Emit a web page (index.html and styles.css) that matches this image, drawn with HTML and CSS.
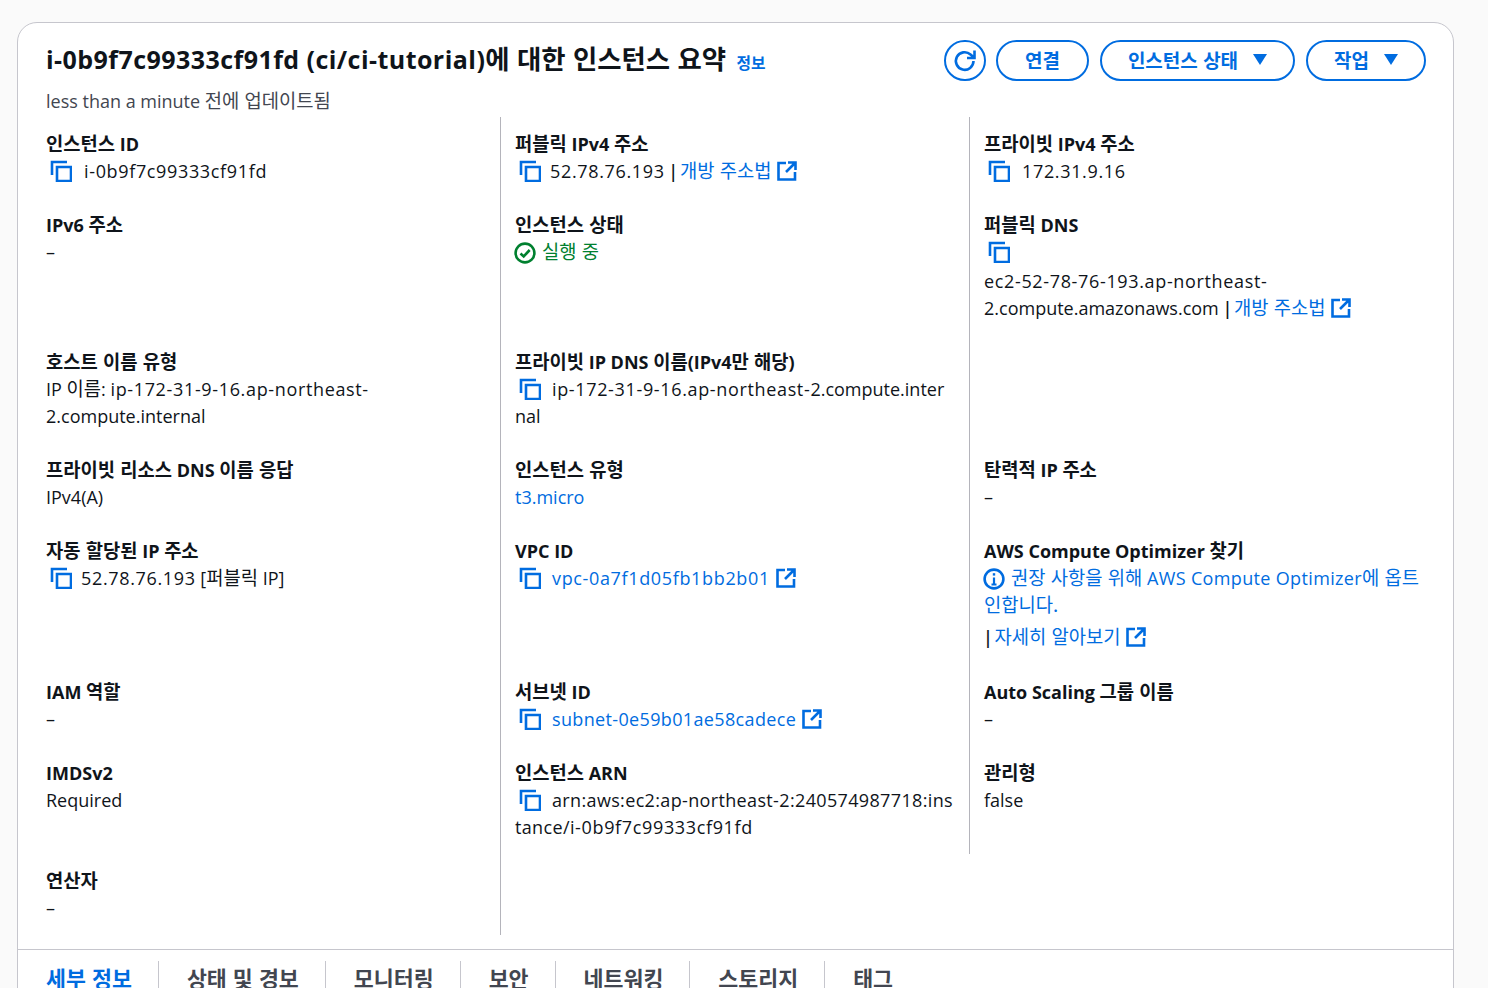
FILE: index.html
```html
<!DOCTYPE html>
<html lang="ko">
<head>
<meta charset="utf-8">
<title>인스턴스 요약</title>
<link rel="stylesheet" href="styles.css">
</head>
<body>
<svg class="defs" width="0" height="0" aria-hidden="true">
  <symbol id="copy" viewBox="0 0 22 22"><path d="M2 15V2h15M7 7h14v14H7z" fill="none" stroke="#006ce0" stroke-width="2.6"/></symbol>
  <symbol id="ext" viewBox="0 0 20 20"><path d="M9 2H1.500v16.500h16.500V11M11 1.500h7.500V9M18.500 1.500 9 11" fill="none" stroke="#006ce0" stroke-width="2.600"/></symbol>
</svg>
<main class="card">
  <header class="head">
    <div class="head-top">
      <h1 class="title"><span class="title-id">i-0b9f7c99333cf91fd (ci/ci-tutorial)</span><span class="ko">에 대한 인스턴스 요약</span> <a class="info">정보</a></h1>
      <div class="actions">
        <button class="btn btn-icon" aria-label="새로 고침"><svg width="24" height="24" viewBox="0 0 24 24"><path d="M20.500 12a8.800 8.800 0 1 1-3-6.600L21 8.500M21.500 1.500v7.500H14" fill="none" stroke="#006ce0" stroke-width="2.600"/></svg></button>
        <button class="btn btn-connect">연결</button>
        <button class="btn btn-state">인스턴스 상태<span class="caret"></span></button>
        <button class="btn btn-action">작업<span class="caret"></span></button>
      </div>
    </div>
    <p class="updated">less than a minute <span class="ko">전에 업데이트됨</span></p>
  </header>
  <section class="grid">
    <div class="cell"><div class="lbl"><span class="ko">인스턴스</span> ID</div><div class="val"><svg class="ic-copy"><use href="#copy"/></svg><span class="gap-l num">i-0b9f7c99333cf91fd</span></div></div>
    <div class="cell sep"><div class="lbl"><span class="ko">퍼블릭</span> IPv4 <span class="ko">주소</span></div><div class="val"><svg class="ic-copy"><use href="#copy"/></svg><span class="num">52.78.76.193</span> <span class="pipe">|</span> <a class="lnk ko">개방 주소법</a> <svg class="ic-ext"><use href="#ext"/></svg></div></div>
    <div class="cell sep"><div class="lbl"><span class="ko">프라이빗</span> IPv4 <span class="ko">주소</span></div><div class="val"><svg class="ic-copy"><use href="#copy"/></svg><span class="gap-l num">172.31.9.16</span></div></div>

    <div class="cell"><div class="lbl">IPv6 <span class="ko">주소</span></div><div class="val">–</div></div>
    <div class="cell sep"><div class="lbl"><span class="ko">인스턴스 상태</span></div><div class="val ok"><svg class="ic-ok" viewBox="0 0 22 22"><circle cx="11" cy="11" r="9.400" fill="none" stroke="#00802f" stroke-width="2.600"/><path d="M6.500 11.500l3.200 3 6-6.500" fill="none" stroke="#00802f" stroke-width="2.600"/></svg><span class="ko">실행 중</span></div></div>
    <div class="cell sep"><div class="lbl"><span class="ko">퍼블릭</span> DNS</div><div class="val icon-row"><svg class="ic-copy"><use href="#copy"/></svg></div><div class="val"><span class="num">ec2-52-78-76-193.ap-northeast-</span>2.compute.amazonaws.com <span class="pipe">|</span> <a class="lnk ko">개방 주소법</a> <svg class="ic-ext"><use href="#ext"/></svg></div></div>

    <div class="cell"><div class="lbl"><span class="ko">호스트 이름 유형</span></div><div class="val">IP <span class="ko">이름</span>: <span class="num">ip-172-31-9-16.ap-northeast-</span>2.compute.internal</div></div>
    <div class="cell sep"><div class="lbl"><span class="ko">프라이빗</span> IP DNS <span class="ko">이름</span>(IPv4<span class="ko">만 해당</span>)</div><div class="val brk"><svg class="ic-copy"><use href="#copy"/></svg><span class="gap-m"><span class="num">ip-172-31-9-16.ap-northeast-</span>2.compute.internal</span></div></div>
    <div class="cell sep"></div>

    <div class="cell"><div class="lbl"><span class="ko">프라이빗 리소스</span> DNS <span class="ko">이름 응답</span></div><div class="val">IPv4(A)</div></div>
    <div class="cell sep"><div class="lbl"><span class="ko">인스턴스 유형</span></div><div class="val"><a class="lnk">t3.micro</a></div></div>
    <div class="cell sep"><div class="lbl"><span class="ko">탄력적</span> IP <span class="ko">주소</span></div><div class="val">–</div></div>

    <div class="cell"><div class="lbl"><span class="ko">자동 할당된</span> IP <span class="ko">주소</span></div><div class="val"><svg class="ic-copy"><use href="#copy"/></svg><span class="num">52.78.76.193</span> [<span class="ko">퍼블릭</span> IP]</div></div>
    <div class="cell sep"><div class="lbl">VPC ID</div><div class="val"><svg class="ic-copy"><use href="#copy"/></svg><a class="lnk gap-m num">vpc-0a7f1d05fb1bb2b01</a> <svg class="ic-ext"><use href="#ext"/></svg></div></div>
    <div class="cell sep"><div class="lbl">AWS Compute Optimizer <span class="ko">찾기</span></div><div class="val"><svg class="ic-info" viewBox="0 0 22 22"><circle cx="11" cy="11" r="9.400" fill="none" stroke="#006ce0" stroke-width="2.600"/><path d="M11 9.500v7M8.500 16.500h5" fill="none" stroke="#006ce0" stroke-width="2.200"/><path d="M9.800 5.200h2.400v2.400H9.800z" fill="#006ce0"/></svg><a class="lnk"><span class="ko">권장 사항을 위해</span> <span class="mix">AWS Compute Optimizer</span><span class="ko">에 옵트인합니다.</span></a></div><div class="val more"><span class="pipe">|</span> <a class="lnk ko">자세히 알아보기</a> <svg class="ic-ext"><use href="#ext"/></svg></div></div>

    <div class="cell"><div class="lbl">IAM <span class="ko">역할</span></div><div class="val">–</div></div>
    <div class="cell sep"><div class="lbl"><span class="ko">서브넷</span> ID</div><div class="val"><svg class="ic-copy"><use href="#copy"/></svg><a class="lnk gap-m mix">subnet-0e59b01ae58cadece</a> <svg class="ic-ext"><use href="#ext"/></svg></div></div>
    <div class="cell sep"><div class="lbl">Auto Scaling <span class="ko">그룹 이름</span></div><div class="val">–</div></div>

    <div class="cell"><div class="lbl">IMDSv2</div><div class="val">Required</div></div>
    <div class="cell sep"><div class="lbl"><span class="ko">인스턴스</span> ARN</div><div class="val brk"><svg class="ic-copy"><use href="#copy"/></svg><span class="gap-m"><span class="mix">arn:aws:ec2:ap-northeast-2:240574987718:instance/</span><span class="num">i-0b9f7c99333cf91fd</span></span></div></div>
    <div class="cell sep"><div class="lbl"><span class="ko">관리형</span></div><div class="val">false</div></div>

    <div class="cell"><div class="lbl"><span class="ko">연산자</span></div><div class="val">–</div></div>
    <div class="cell sep"></div>
  </section>
  <nav class="tabs">
    <span class="tab active">세부 정보</span>
    <span class="tab">상태 및 경보</span>
    <span class="tab">모니터링</span>
    <span class="tab">보안</span>
    <span class="tab">네트워킹</span>
    <span class="tab">스토리지</span>
    <span class="tab">태그</span>
  </nav>
</main>
</body>
</html>
```
FILE: styles.css
```css
* { box-sizing: border-box; }
html, body { margin: 0; height: 988px; overflow: hidden; }
body {
  background: #fafafa;
  color: #0f141a;
  font-family: "Open Sans", "Noto Sans CJK KR", sans-serif;
  font-size: 18px;
  line-height: 27px;
  padding: 22px 34px 0 17px;
}
.ko { font-family: "Noto Sans CJK KR", sans-serif; font-size: 18.750px; line-height: 1; letter-spacing: 0; }
.num { letter-spacing: 0.650px; }
.mix { letter-spacing: 0.350px; }
.pipe { font-weight: 600; margin: 0 -3px 0 -1px; }
.defs { display: block; height: 0; }
.card {
  background: #fff;
  border: 1px solid #c6c6cd;
  border-radius: 20px;
  height: 1100px;
}
.head { padding: 16px 27px 0 28px; }
.head-top { display: flex; justify-content: space-between; align-items: flex-start; }
.title { margin: 0; font-size: 25px; line-height: 40px; font-weight: 700; white-space: nowrap; }
.title-id { letter-spacing: 0.450px; }
.title .ko { font-size: 26.400px; }
.info { color: #006ce0; font-family: "Noto Sans CJK KR", sans-serif; font-size: 15.800px; line-height: 1; font-weight: 700; margin-left: 4px; }
.actions { display: flex; gap: 11px; margin-top: 1px; }
.btn {
  height: 41px;
  border: 2px solid #006ce0;
  border-radius: 21px;
  background: #fff;
  color: #006ce0;
  font: 700 19px "Noto Sans CJK KR", sans-serif;
  line-height: 1;
  display: flex;
  align-items: center;
  justify-content: center;
  padding: 0 0 2px;
}
.btn-icon { width: 42px; margin-right: -1px; padding: 0; }
.btn-connect { width: 93px; }
.btn-state { width: 195px; }
.btn-action { width: 120px; }
.caret {
  width: 0; height: 0;
  margin-left: 15px;
  border-left: 7.500px solid transparent;
  border-right: 7.500px solid transparent;
  border-top: 11px solid #006ce0;
}
.updated { margin: 7px 0 0; color: #424650; line-height: 27px; }
.grid {
  display: grid;
  grid-template-columns: 482px 469px 1fr;
  grid-template-rows: 81px 137px 108px 81px 141px 81px 108px 81px;
  margin: 2px 0 14px;
}
.cell { padding: 14px 14px 0; min-width: 0; }
.grid > .cell:nth-child(3n+1) { padding-left: 28px; }
.grid > .cell:nth-child(3n) { padding-right: 24px; }
.sep { border-left: 1px solid #b4b4bb; }
.lbl { font-weight: 700; height: 27px; }
.val { min-height: 27px; }
.icon-row { height: 29px; }
.more { margin-top: 5px; }
.lnk { color: #006ce0; }
.ok { color: #00802f; }
.brk { word-break: break-all; }
.ic-copy { width: 22px; height: 22px; vertical-align: -4px; margin-left: 4px; margin-right: 9px; }
.gap-l { margin-left: 3px; }
.gap-m { margin-left: 2px; }
.ic-ext { width: 20px; height: 20px; vertical-align: -3px; margin-left: 1px; }
.ic-ok, .ic-info { width: 22px; height: 22px; vertical-align: -5px; margin-left: -1px; margin-right: 6px; }
.tabs {
  display: flex;
  border-top: 1px solid #c6c6cd;
  padding: 11px 0 0 1px;
}
.tab {
  color: #424650;
  font-family: "Noto Sans CJK KR", sans-serif;
  font-size: 21.700px;
  font-weight: 700;
  line-height: 34px;
  padding: 0 26px 10px 28px;
  border-left: 1px solid #c6c6cd;
  white-space: nowrap;
}
.tab.active { color: #006ce0; border-left: 0; padding: 0 26px 10px 27px; }
```
